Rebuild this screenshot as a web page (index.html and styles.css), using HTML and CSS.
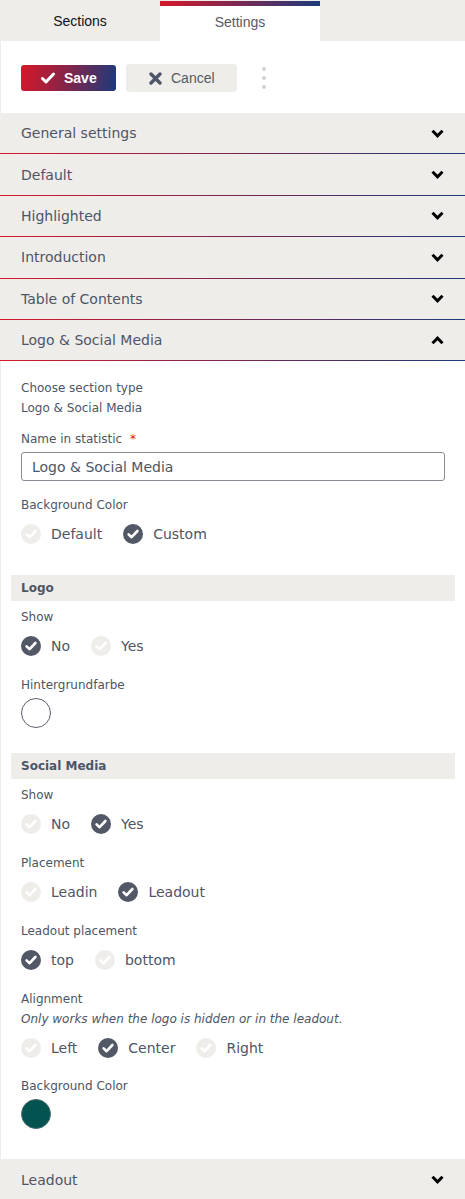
FILE: index.html
```html
<!DOCTYPE html>
<html lang="en">
<head>
<meta charset="utf-8">
<title>Settings</title>
<link rel="stylesheet" href="styles.css">
</head>
<body>
<div class="tabs">
  <div class="tab">Sections</div>
  <div class="tab tab--active">Settings</div>
</div>
<div class="toolbar">
  <button class="btn btn--save">
    <svg class="btn-icon" viewBox="0 0 14 12" width="14" height="12"><path d="M1.5 6.5 L5 10 L12.5 2" fill="none" stroke="#fff" stroke-width="3" stroke-linecap="round" stroke-linejoin="round"/></svg>
    <span>Save</span>
  </button>
  <button class="btn btn--cancel">
    <svg class="btn-icon" viewBox="0 0 13 13" width="13" height="13"><path d="M2 2 L11 11 M11 2 L2 11" fill="none" stroke="#4d5566" stroke-width="3.4" stroke-linecap="round"/></svg>
    <span>Cancel</span>
  </button>
  <div class="dots"><i></i><i></i><i></i></div>
</div>

<div class="accordion">
  <div class="acc-head"><span>General settings</span><svg class="chev" viewBox="0 0 13 9" width="13" height="9"><path d="M1.5 1.8 L6.5 6.8 L11.5 1.8" fill="none" stroke="#000" stroke-width="3"/></svg></div>
  <div class="acc-head"><span>Default</span><svg class="chev" viewBox="0 0 13 9" width="13" height="9"><path d="M1.5 1.8 L6.5 6.8 L11.5 1.8" fill="none" stroke="#000" stroke-width="3"/></svg></div>
  <div class="acc-head"><span>Highlighted</span><svg class="chev" viewBox="0 0 13 9" width="13" height="9"><path d="M1.5 1.8 L6.5 6.8 L11.5 1.8" fill="none" stroke="#000" stroke-width="3"/></svg></div>
  <div class="acc-head"><span>Introduction</span><svg class="chev" viewBox="0 0 13 9" width="13" height="9"><path d="M1.5 1.8 L6.5 6.8 L11.5 1.8" fill="none" stroke="#000" stroke-width="3"/></svg></div>
  <div class="acc-head"><span>Table of Contents</span><svg class="chev" viewBox="0 0 13 9" width="13" height="9"><path d="M1.5 1.8 L6.5 6.8 L11.5 1.8" fill="none" stroke="#000" stroke-width="3"/></svg></div>
  <div class="acc-head"><span>Logo &amp; Social Media</span><svg class="chev" viewBox="0 0 13 9" width="13" height="9"><path d="M1.5 7.2 L6.5 2.2 L11.5 7.2" fill="none" stroke="#000" stroke-width="3"/></svg></div>

  <div class="panel">
    <div class="field field--static">
      <div class="label">Choose section type</div>
      <div class="label">Logo &amp; Social Media</div>
    </div>
    <div class="field field--input">
      <div class="label">Name in statistic <span class="req">*</span></div>
      <input class="text-input" type="text" value="Logo &amp; Social Media">
    </div>
    <div class="field">
      <div class="label">Background Color</div>
      <div class="radios">
        <span class="radio"><span class="dot"></span>Default</span>
        <span class="radio"><span class="dot dot--on"></span>Custom</span>
      </div>
    </div>

    <div class="section-bar">Logo</div>
    <div class="field">
      <div class="label">Show</div>
      <div class="radios">
        <span class="radio"><span class="dot dot--on"></span>No</span>
        <span class="radio"><span class="dot"></span>Yes</span>
      </div>
    </div>
    <div class="field field--color">
      <div class="label">Hintergrundfarbe</div>
      <div class="swatch swatch--white"></div>
    </div>

    <div class="section-bar">Social Media</div>
    <div class="field">
      <div class="label">Show</div>
      <div class="radios">
        <span class="radio"><span class="dot"></span>No</span>
        <span class="radio"><span class="dot dot--on"></span>Yes</span>
      </div>
    </div>
    <div class="field">
      <div class="label">Placement</div>
      <div class="radios">
        <span class="radio"><span class="dot"></span>Leadin</span>
        <span class="radio"><span class="dot dot--on"></span>Leadout</span>
      </div>
    </div>
    <div class="field">
      <div class="label">Leadout placement</div>
      <div class="radios">
        <span class="radio"><span class="dot dot--on"></span>top</span>
        <span class="radio"><span class="dot"></span>bottom</span>
      </div>
    </div>
    <div class="field field--tight">
      <div class="label">Alignment</div>
      <div class="label label--note">Only works when the logo is hidden or in the leadout.</div>
      <div class="radios">
        <span class="radio"><span class="dot"></span>Left</span>
        <span class="radio"><span class="dot dot--on"></span>Center</span>
        <span class="radio"><span class="dot"></span>Right</span>
      </div>
    </div>
    <div class="field field--color field--last">
      <div class="label">Background Color</div>
      <div class="swatch swatch--teal"></div>
    </div>
  </div>

  <div class="acc-head acc-head--plain"><span>Leadout</span><svg class="chev" viewBox="0 0 13 9" width="13" height="9"><path d="M1.5 1.8 L6.5 6.8 L11.5 1.8" fill="none" stroke="#000" stroke-width="3"/></svg></div>
</div>
</body>
</html>
```

FILE: styles.css
```css
* { box-sizing: border-box; }

html, body {
  margin: 0;
  padding: 0;
}

body {
  background: #efedea;
  font-family: "DejaVu Sans", Verdana, sans-serif;
  color: #4d5566;
  width: 465px;
  overflow-x: hidden;
}

.tabs {
  display: flex;
  padding-top: 1px;
  height: 41px;
}

.tab {
  width: 160px;
  height: 40px;
  display: flex;
  align-items: center;
  justify-content: center;
  font-family: "Liberation Sans", Arial, sans-serif;
  font-size: 14px;
  color: #111;
}

.tab--active {
  background: #fff;
  color: #555a64;
  border-top: 5px solid transparent;
  border-image: linear-gradient(90deg, #d7182a, #1b3a7c) 1;
  border-width: 5px 0 0 0;
  padding-bottom: 4px;
}

.toolbar {
  background: #fff;
  margin-left: 1px;
  padding: 23px 20px 21px 20px;
  display: flex;
  align-items: center;
  height: 72px;
}

.btn {
  display: inline-flex;
  align-items: center;
  gap: 9px;
  border: none;
  border-radius: 3px;
  font-family: "Liberation Sans", Arial, sans-serif;
  font-size: 14px;
  cursor: pointer;
}

.btn--save {
  height: 26px;
  width: 95px;
  padding: 0 0 0 20px;
  color: #fff;
  font-weight: bold;
  background: linear-gradient(100deg, #d7182a 0%, #8b2346 45%, #1b3a7c 100%);
}

.btn--cancel {
  margin-left: 10px;
  height: 28px;
  width: 111px;
  padding: 0 0 0 23px;
  color: #555a64;
  background: #efedea;
}

.dots {
  margin-left: 25px;
  display: flex;
  flex-direction: column;
  gap: 5px;
}

.dots i {
  display: block;
  width: 4px;
  height: 4px;
  border-radius: 50%;
  background: #d2d2d2;
}

.accordion {
  display: flex;
  flex-direction: column;
}

.acc-head {
  height: 41.4px;
  padding: 0 21px 0 21px;
  display: flex;
  align-items: center;
  justify-content: space-between;
  font-size: 14px;
  color: #4d5566;
  background: #efedea;
  border-bottom: 1px solid transparent;
  border-image: linear-gradient(90deg, #d7182a, #7a2550 50%, #1b3a7c) 1;
  border-width: 0 0 1px 0;
  flex: none;
}

.acc-head--plain {
  border: none;
  border-image: none;
  height: 41px;
}

.chev {
  display: block;
}

.panel {
  background: #fff;
  margin-left: 1px;
  padding: 17px 10px 17px 10px;
  display: flex;
  flex-direction: column;
}

.field {
  padding: 0 10px;
  margin-bottom: 19px;
}

.field--static { margin-bottom: 11px; }
.field--input { margin-bottom: 14px; }
.field--tight { margin-bottom: 18px; }
.field--color { margin-bottom: 13px; }
.field--last { margin-bottom: 13px; }

.label {
  font-size: 12px;
  line-height: 20px;
  color: #4d5566;
}

.label--note {
  font-style: italic;
}

.req {
  color: #e0141e;
  margin-left: 4px;
}

.text-input {
  display: block;
  width: 100%;
  height: 29px;
  margin-top: 3px;
  border: 1px solid #8a8d94;
  border-radius: 3px;
  padding: 0 10px;
  font-family: "DejaVu Sans", Verdana, sans-serif;
  font-size: 14px;
  color: #4d5566;
  background: #fff;
}

.radios {
  display: flex;
  gap: 21px;
  margin-top: 9px;
  height: 20px;
  align-items: center;
}

.radio {
  display: inline-flex;
  align-items: center;
  gap: 10px;
  font-size: 14px;
  color: #4d5566;
}

.dot {
  width: 20px;
  height: 20px;
  border-radius: 50%;
  background-color: #efedea;
  background-image: url("data:image/svg+xml,%3Csvg xmlns='http://www.w3.org/2000/svg' viewBox='0 0 20 20'%3E%3Cpath d='M5.6 10.4 L8.6 13.2 L14.4 7' fill='none' stroke='%23fff' stroke-width='2.6' stroke-linecap='round' stroke-linejoin='round'/%3E%3C/svg%3E");
  background-size: 20px 20px;
  flex: none;
}

.dot--on {
  background-color: #525866;
}

.swatch {
  width: 30px;
  height: 30px;
  border-radius: 50%;
  margin-top: 3px;
}

.swatch--white {
  background: #fff;
  border: 1px solid #5a5f6a;
}

.swatch--teal {
  background: #035350;
  border: 1px solid #4c6a70;
}

.section-bar {
  margin-top: 12px;
  margin-bottom: 6px;
  height: 26px;
  padding: 0 10px;
  background: #efedea;
  display: flex;
  align-items: center;
  font-size: 12px;
  font-weight: bold;
  color: #4d5566;
}
```
